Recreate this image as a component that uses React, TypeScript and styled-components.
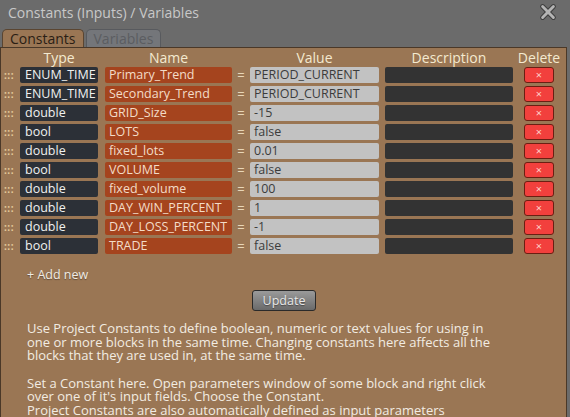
import styled, { createGlobalStyle } from 'styled-components';

type Constant = {
  type: string;
  name: string;
  value: string;
};

const constants: Constant[] = [
  { type: 'ENUM_TIME', name: 'Primary_Trend', value: 'PERIOD_CURRENT' },
  { type: 'ENUM_TIME', name: 'Secondary_Trend', value: 'PERIOD_CURRENT' },
  { type: 'double', name: 'GRID_Size', value: '-15' },
  { type: 'bool', name: 'LOTS', value: 'false' },
  { type: 'double', name: 'fixed_lots', value: '0.01' },
  { type: 'bool', name: 'VOLUME', value: 'false' },
  { type: 'double', name: 'fixed_volume', value: '100' },
  { type: 'double', name: 'DAY_WIN_PERCENT', value: '1' },
  { type: 'double', name: 'DAY_LOSS_PERCENT', value: '-1' },
  { type: 'bool', name: 'TRADE', value: 'false' },
];

// column widths and left gaps, measured off the screenshot
const cols = {
  grip: { w: 18, ml: 0 },
  type: { w: 78, ml: 0 },
  name: { w: 127, ml: 7 },
  eq: { w: 18, ml: 0 },
  value: { w: 129, ml: 0 },
  desc: { w: 128, ml: 6 },
  del: { w: 30, ml: 11 },
};
type Col = keyof typeof cols;

export default function App() {
  return (
    <>
      <GlobalStyle />
      <Window>
        <TitleBar>
          <Title>Constants (Inputs) / Variables</Title>
          <CloseIcon viewBox="0 0 20 20">
            <path
              d="M4 4 L16 16 M16 4 L4 16"
              stroke="#3e3e3e"
              strokeWidth="5.5"
              strokeLinecap="round"
            />
            <path
              d="M4 4 L16 16 M16 4 L4 16"
              stroke="#b4b4b4"
              strokeWidth="3.2"
              strokeLinecap="round"
            />
          </CloseIcon>
        </TitleBar>

        <Tabs>
          <Tab active>Constants</Tab>
          <Tab>Variables</Tab>
        </Tabs>

        <Panel>
          <HeaderRow>
            <Cell col="grip" />
            <Heading col="type">Type</Heading>
            <Heading col="name">Name</Heading>
            <Cell col="eq" />
            <Heading col="value">Value</Heading>
            <Heading col="desc">Description</Heading>
            <Heading col="del" wide>Delete</Heading>
          </HeaderRow>

          <Rows>
            {constants.map((c) => (
              <Row key={c.name}>
                <Grip col="grip">:::</Grip>
                <Field col="type">{c.type}</Field>
                <Field col="name">{c.name}</Field>
                <Equals col="eq">=</Equals>
                <Field col="value">{c.value}</Field>
                <Field col="desc" />
                <DeleteButton col="del">×</DeleteButton>
              </Row>
            ))}
          </Rows>

          <AddNew>+ Add new</AddNew>

          <UpdateRow>
            <UpdateButton>Update</UpdateButton>
          </UpdateRow>

          <Help>
            <p>
              Use Project Constants to define boolean, numeric or text values for using in
              one or more blocks in the same time. Changing constants here affects all the
              blocks that they are used in, at the same time.
            </p>
            <p>
              Set a Constant here. Open parameters window of some block and right click
              over one of it's input fields. Choose the Constant.
              <br />
              Project Constants are also automatically defined as input parameters
            </p>
          </Help>
        </Panel>
      </Window>
    </>
  );
}

const GlobalStyle = createGlobalStyle`
  html, body {
    margin: 0;
    padding: 0;
    background: #6b6b6b;
    overflow: hidden;
  }
  body {
    font-family: "Open Sans", "DejaVu Sans", sans-serif;
  }
`;

const Window = styled.div`
  width: 570px;
  height: 417px;
  display: flex;
  flex-direction: column;
  background: #6b6b6b;
  overflow: hidden;
`;

const TitleBar = styled.div`
  height: 28px;
  flex-shrink: 0;
  display: flex;
  align-items: center;
  justify-content: space-between;
  padding: 0 13px 4px 8px;
  box-sizing: border-box;
`;

const Title = styled.div`
  font-size: 14px;
  color: #c8c8c8;
`;

const CloseIcon = styled.svg`
  width: 18px;
  height: 18px;
`;

const Tabs = styled.div`
  display: flex;
  flex-shrink: 0;
  gap: 2px;
  padding: 1px 0 0 2px;
  height: 18px;
`;

const Tab = styled.div<{ active?: boolean }>`
  padding: 0 7px;
  height: 18px;
  line-height: 18px;
  font-size: 14px;
  border: 1px solid ${(p) => (p.active ? '#5a4531' : '#585a5e')};
  border-bottom: none;
  border-radius: 5px 5px 0 0;
  background: ${(p) => (p.active ? '#9a7654' : '#74767a')};
  color: ${(p) => (p.active ? '#2a1e14' : '#5b5d61')};
`;

const Panel = styled.div`
  flex: 1;
  margin-right: 3px;
  background: #9a7654;
  border: 1px solid #4a3828;
  border-bottom: none;
  padding-left: 1px;
  display: flex;
  flex-direction: column;
`;

const Cell = styled.div<{ col: Col }>`
  flex: none;
  width: ${(p) => cols[p.col].w}px;
  margin-left: ${(p) => cols[p.col].ml}px;
`;

const HeaderRow = styled.div`
  display: flex;
  align-items: center;
  height: 19px;
`;

const Heading = styled(Cell)<{ wide?: boolean }>`
  text-align: center;
  font-size: 14px;
  line-height: 17px;
  color: #f4ead0;
  white-space: nowrap;
  ${(p) => p.wide && 'margin-left: 1px; width: 50px;'}
`;

const Rows = styled.div`
  display: flex;
  flex-direction: column;
  gap: 3px;
`;

const Row = styled.div`
  display: flex;
  align-items: center;
  height: 16px;
`;

const Grip = styled(Cell)`
  font-size: 10px;
  font-weight: bold;
  letter-spacing: 0.5px;
  color: #e6cc9c;
  padding-left: 2px;
  box-sizing: border-box;
  line-height: 16px;
`;

const fieldColors: Record<string, { bg: string; fg: string }> = {
  type: { bg: '#2c3037', fg: '#f0f0f0' },
  name: { bg: '#a5441e', fg: '#f3dcc8' },
  value: { bg: '#c2c2c2', fg: '#3c3c3c' },
  desc: { bg: '#333333', fg: '#f0f0f0' },
};

const Field = styled(Cell)`
  height: 16px;
  line-height: 16px;
  box-sizing: border-box;
  padding-left: ${(p) => (p.col === 'type' ? '5px' : '4px')};
  border-radius: 2px;
  font-size: 12.5px;
  white-space: nowrap;
  overflow: hidden;
  background: ${(p) => fieldColors[p.col].bg};
  color: ${(p) => fieldColors[p.col].fg};
`;

const Equals = styled(Cell)`
  text-align: center;
  font-size: 13px;
  color: #e8d6b8;
  line-height: 16px;
`;

const DeleteButton = styled(Cell)`
  height: 16px;
  box-sizing: border-box;
  background: #f2403d;
  border: 1px solid #6a1f12;
  border-radius: 3px;
  color: #ffd0c8;
  font-size: 11px;
  line-height: 13px;
  text-align: center;
`;

const AddNew = styled.div`
  margin: 13px 0 0 25px;
  font-size: 12.5px;
  line-height: 16px;
  color: #f0ece4;
  text-shadow: 0 1px 1px rgba(0, 0, 0, 0.35);
`;

const UpdateRow = styled.div`
  display: flex;
  padding-left: 250px;
  margin-top: 7px;
`;

const UpdateButton = styled.div`
  width: 64px;
  height: 21px;
  box-sizing: border-box;
  border: 1px solid #2a2a2a;
  border-radius: 3px;
  background: linear-gradient(#9a9a9a, #6a6a6a);
  color: #e8e8e8;
  font-size: 12.5px;
  line-height: 19px;
  text-align: center;
  text-shadow: 0 1px 1px rgba(0, 0, 0, 0.4);
`;

const Help = styled.div`
  width: 472px;
  padding-left: 25px;
  margin-top: 11px;
  font-size: 13px;
  line-height: 13.6px;
  color: #f2ece2;

  p {
    margin: 0 0 14px;
  }
`;
